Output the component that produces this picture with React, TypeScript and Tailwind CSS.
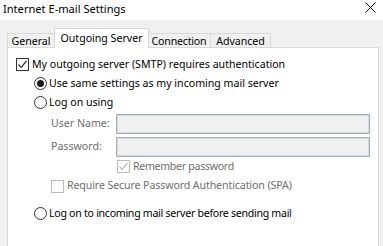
import React from 'react';

const font = { fontFamily: '"Noto Sans", "Segoe UI", sans-serif' };

const Check = ({ checked, disabled }: { checked?: boolean; disabled?: boolean }) => (
  <span
    className={`w-[13px] h-[13px] shrink-0 border flex items-center justify-center ${
      disabled ? 'border-[#bcbcbc] bg-[#fdfdfd]' : 'border-[#333333] bg-white'
    }`}
  >
    {checked && (
      <svg width="11" height="11" viewBox="0 0 11 11">
        <path d="M1.5 5.5 L4.2 8.3 L9.5 2" fill="none" stroke={disabled ? '#bcbcbc' : '#333333'} strokeWidth="1.2" />
      </svg>
    )}
  </span>
);

const Radio = ({ checked }: { checked?: boolean }) => (
  <span className="w-[13px] h-[13px] shrink-0 rounded-full border border-[#333333] bg-white flex items-center justify-center">
    {checked && <span className="w-[7px] h-[7px] rounded-full bg-[#1a1a1a]"></span>}
  </span>
);

const Field = ({ label }: { label: string }) => (
  <div className="flex items-center h-[20px]">
    <span className="w-[66px] shrink-0 pl-[1px] whitespace-nowrap text-[#6d6d6d]">{label}</span>
    <div className="w-[254px] shrink-0 h-[20px] border border-[#adadad] bg-[#f0f0f0] shadow-[inset_0_0_0_1px_#c7dbf2]"></div>
  </div>
);

export default function App() {
  return (
    <div className="w-[383px] h-[246px] overflow-hidden bg-[#f0f0f0] text-[10.6px] text-black whitespace-nowrap" style={font}>
      {/* title bar */}
      <div className="h-[20px] bg-white flex items-center justify-between pl-[3px] pr-[7px]">
        <span className="leading-none -mt-[3px] text-[11.1px]">Internet E-mail Settings</span>
        <svg width="11" height="11" viewBox="0 0 11 11" className="-mt-[6px]">
          <path d="M0.5 0.5 L10.5 10.5 M10.5 0.5 L0.5 10.5" stroke="#111" strokeWidth="1" />
        </svg>
      </div>

      <div className="pl-[7px] pr-[5px] pt-[7px]">
        {/* tabs */}
        <div className="flex items-end h-[20px]">
          <div className="h-[14px] w-[48px] shrink-0 border border-b-0 border-[#d9d9d9] flex items-center justify-center pt-[1px] leading-none">General</div>
          <div className="h-[20px] w-[95px] shrink-0 -ml-[1px] -mb-[1px] relative z-10 bg-white border border-b-0 border-[#d9d9d9] flex items-start justify-center pt-[4px] leading-none">
            Outgoing Server
          </div>
          <div className="h-[14px] w-[63px] shrink-0 -ml-[1px] border border-b-0 border-l-0 border-[#d9d9d9] flex items-center justify-center pt-[1px] leading-none tracking-[-0.2px]">Connection</div>
          <div className="h-[14px] w-[60px] shrink-0 border border-b-0 border-l-0 border-[#d9d9d9] flex items-center justify-center pt-[1px] leading-none">Advanced</div>
        </div>

        {/* panel */}
        <div className="w-[372px] h-[210px] bg-white border border-[#d9d9d9] pt-[7px] pl-[8px]">
          <div className="flex items-center gap-[3px] h-[19px]">
            <Check checked />
            <span>My outgoing server (SMTP) requires authentication</span>
          </div>
          <div className="pl-[18px]">
            <div className="flex items-center gap-[2px] h-[19px]">
              <Radio checked />
              <span>Use same settings as my incoming mail server</span>
            </div>
            <div className="flex items-center gap-[2px] h-[19px]">
              <Radio />
              <span>Log on using</span>
            </div>
            <div className="pl-[16px] mt-[2px] flex flex-col gap-[3px]">
              <Field label="User Name:" />
              <Field label="Password:" />
            </div>
            <div className="pl-[83px] flex items-center gap-[3px] h-[19px] text-[#6d6d6d]">
              <Check checked disabled />
              <span className="tracking-[-0.3px]">Remember password</span>
            </div>
            <div className="pl-[17px] flex items-center gap-[3px] h-[20px] text-[#6d6d6d]">
              <Check disabled />
              <span className="tracking-[-0.1px]">Require Secure Password Authentication (SPA)</span>
            </div>
            <div className="mt-[8px] flex items-center gap-[2px] h-[19px]">
              <Radio />
              <span className="tracking-[-0.28px]">Log on to incoming mail server before sending mail</span>
            </div>
          </div>
        </div>
      </div>
    </div>
  );
}
